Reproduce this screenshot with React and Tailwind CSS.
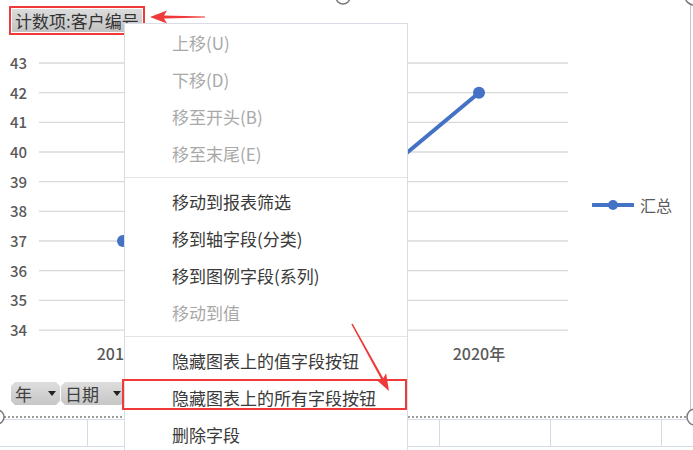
import React from "react";

const yLabels = [43, 42, 41, 40, 39, 38, 37, 36, 35, 34];
const step = 29.67;
// x inside plot svg (plot starts at x=39)
const points = [
  { x: 84, v: 37 },
  { x: 262, v: 37 },
  { x: 440, v: 42 },
];
const yOf = (v) => 10 + (43 - v) * step;

const menuItems = [
  { label: "上移(U)", disabled: true },
  { label: "下移(D)", disabled: true },
  { label: "移至开头(B)", disabled: true },
  { label: "移至末尾(E)", disabled: true },
  { sep: true },
  { label: "移动到报表筛选" },
  { label: "移到轴字段(分类)" },
  { label: "移到图例字段(系列)" },
  { label: "移动到值", disabled: true },
  { sep: true },
  { label: "隐藏图表上的值字段按钮" },
  { label: "隐藏图表上的所有字段按钮" },
  { label: "删除字段" },
];

function FieldButton({ label, className }) {
  return (
    <div
      className={`flex h-[23px] shrink-0 items-center bg-gradient-to-b from-[#dedede] to-[#c6c6c6] pl-[4px] text-[17px] leading-[23px] text-[#404040] [clip-path:polygon(4px_0,calc(100%_-_4px)_0,100%_4px,100%_calc(100%_-_4px),calc(100%_-_4px)_100%,4px_100%,0_calc(100%_-_4px),0_4px)] ${className}`}
    >
      <span>{label}</span>
      <svg width="8" height="5" viewBox="0 0 8 5" className="ml-auto mr-[4px]">
        <polygon points="0,0 8,0 4,5" fill="#222" />
      </svg>
    </div>
  );
}

export default function App() {
  return (
    <div
      className="relative h-[450px] w-[693px] overflow-hidden bg-white"
      style={{ fontFamily: '"Noto Sans CJK SC", "Noto Sans", sans-serif' }}
    >
      {/* chart area */}
      <div className="flex h-[416px] w-[691px] flex-col border-r border-[#c4c4c4]">
        {/* title field button */}
        <div className="h-[53px] pl-[9px] pt-[6px]">
          <div className="inline-flex border-2 border-[#f03a3a] p-px">
            <div className="h-[23px] bg-gradient-to-b from-[#dcdcdc] to-[#c2c2c2] px-[3px] text-[17px] leading-[23px] text-[#333]">
              计数项:客户编号
            </div>
          </div>
        </div>

        {/* plot row */}
        <div className="flex h-[287px]">
          <div className="flex w-[39px] shrink-0 flex-col items-end justify-between pr-[12px]">
            {yLabels.map((n) => (
              <div key={n} className="h-[20px] text-[15px] font-medium leading-[20px] text-[#595959]">
                {n}
              </div>
            ))}
          </div>
          <svg width="529" height="287" className="shrink-0 overflow-visible">
            {yLabels.map((n, i) => (
              <line key={n} x1="0" x2="529" y1={10 + i * step} y2={10 + i * step} stroke="#d9d9d9" strokeWidth="1.3" />
            ))}
            <polyline
              points={points.map((p) => `${p.x},${yOf(p.v)}`).join(" ")}
              fill="none"
              stroke="#4472c4"
              strokeWidth="4"
              strokeLinecap="round"
            />
            {points.map((p) => (
              <circle key={p.x} cx={p.x} cy={yOf(p.v)} r="6" fill="#4472c4" />
            ))}
          </svg>
          <div className="ml-[24px] mt-[141px] flex h-[22px] items-center gap-[6px]">
            <svg width="42" height="12" viewBox="0 0 42 12">
              <line x1="1" x2="41" y1="6" y2="6" stroke="#4472c4" strokeWidth="4" strokeLinecap="round" />
              <circle cx="21" cy="6" r="5" fill="#4472c4" />
            </svg>
            <span className="text-[16px] leading-[22px] text-[#595959]">汇总</span>
          </div>
        </div>

        {/* x axis labels (middle one sits under the menu) */}
        <div className="flex h-[26px] pl-[34px] text-[16px] font-medium leading-[26px] text-[#595959]">
          <div className="w-[178px] shrink-0 text-center">2018年</div>
          <div className="w-[178px] shrink-0" />
          <div className="w-[178px] shrink-0 text-center">2020年</div>
        </div>

        {/* axis field buttons */}
        <div className="flex gap-[1px] pl-[11px] pt-[16px]">
          <FieldButton label="年" className="w-[49px]" />
          <FieldButton label="日期" className="w-[64px]" />
        </div>
      </div>

      {/* dotted selection edge */}
      <div className="w-[690px] border-t-2 border-dotted border-[#9c9c9c]" />

      {/* worksheet grid below */}
      <div className="mt-[1px] flex h-[28px] border-y border-[#d4dbe7]">
        <div className="w-[88px] shrink-0 border-r border-[#d4dbe7]" />
        <div className="w-[176px] shrink-0 border-r border-[#d4dbe7]" />
        <div className="w-[176px] shrink-0 border-r border-[#d4dbe7]" />
        <div className="w-[111px] shrink-0 border-r border-[#d4dbe7]" />
        <div className="w-[111px] shrink-0 border-r border-[#d4dbe7]" />
        <div className="w-[111px] shrink-0" />
      </div>

      {/* context menu */}
      <div className="absolute left-[124px] top-[23px] w-[284px] border border-[#d8dce4] bg-white">
        {menuItems.map((it, i) =>
          it.sep ? (
            <div key={i} className="my-[5px] h-px bg-[#e2e4e8]" />
          ) : (
            <div
              key={i}
              className={`h-[37px] pl-[47px] text-[17px] leading-[37px] ${it.disabled ? "text-[#a8a8a8]" : "text-[#3a3a3a]"}`}
            >
              {it.label}
            </div>
          )
        )}
      </div>

      {/* highlight box */}
      <div className="absolute left-[122px] top-[379px] h-[31px] w-[285px] border-2 border-[#f03a3a]" />

      {/* arrows and handles */}
      <svg className="pointer-events-none absolute left-0 top-0" width="693" height="450">
        <polygon
          points="150,17 167,10.5 164,15.6 205,16.6 205,17.4 164,18.4 167,23.5"
          fill="#f03a3a"
        />
        <polygon
          points="389,391 375.5,379 381.15,379.3 351.3,324.3 352.7,323.7 383.25,378.2 386.1,373.2"
          fill="#f03a3a"
        />
        <circle cx="343" cy="-3" r="7" fill="#fff" stroke="#7a7a7a" strokeWidth="1.5" />
        <circle cx="694" cy="-4" r="9" fill="#fff" stroke="#7a7a7a" strokeWidth="1.5" />
        <circle cx="-3" cy="417" r="7" fill="#fff" stroke="#7a7a7a" strokeWidth="1.5" />
        <circle cx="695" cy="417" r="8" fill="#fff" stroke="#7a7a7a" strokeWidth="1.5" />
      </svg>
    </div>
  );
}
